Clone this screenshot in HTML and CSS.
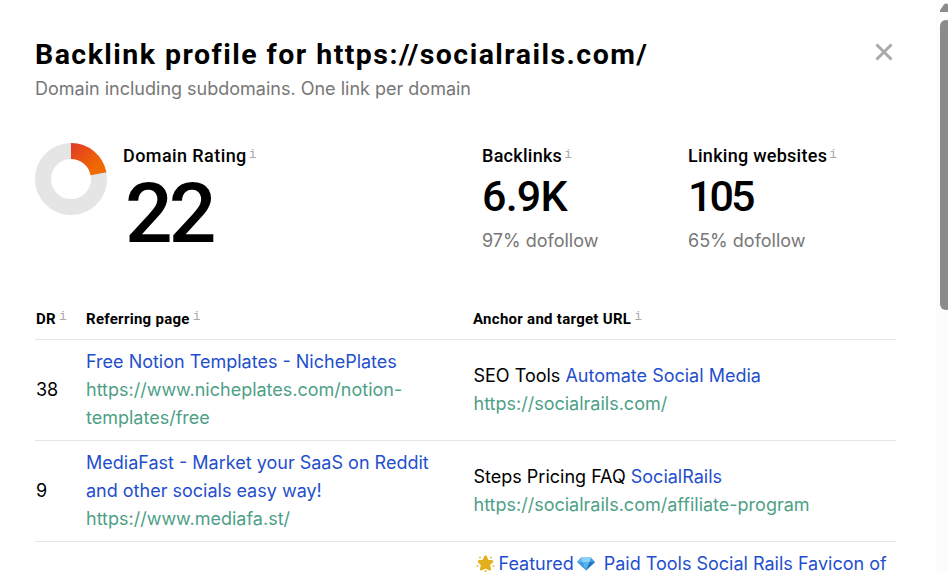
FILE: index.html
```
<!DOCTYPE html>
<html lang="en">
<head>
  <meta charset="UTF-8" />
  <meta name="viewport" content="width=device-width, initial-scale=1.0"/>
  <title>Backlink profile</title>
  <link rel="stylesheet" href="styles.css">
</head>
<body>
  <main class="modal">
    <header class="modal-header">
      <div>
        <h1>Backlink profile for https://socialrails.com/</h1>
        <p class="subtitle">Domain including subdomains. One link per domain</p>
      </div>
      <button class="close" type="button" aria-label="Close">
        <svg width="18" height="18" viewBox="0 0 18 18"><path d="M1.5 1.5l15 15M16.5 1.5l-15 15" fill="none" stroke="#aaa" stroke-width="3"/></svg>
      </button>
    </header>

    <section class="stats">
      <div class="rating">
        <svg class="donut" width="72" height="72" viewBox="0 0 72 72">
          <defs>
            <linearGradient id="heat" x1="0" y1="0" x2="1" y2="1">
              <stop offset="0" stop-color="#e03a28"/>
              <stop offset="0.75" stop-color="#f16a00"/>
            </linearGradient>
          </defs>
          <circle cx="36" cy="36" r="28" fill="none" stroke="#e5e5e5" stroke-width="16"/>
          <path d="M36 0A36 36 0 0 1 71.400 29.300L55.600 32.200A20 20 0 0 0 36 16Z" fill="url(#heat)"/>
        </svg>
        <div>
          <div class="label label-rating">Domain Rating<i class="info">i</i></div>
          <div class="value value-big">22</div>
        </div>
      </div>
      <div class="stat">
        <div class="label">Backlinks<i class="info">i</i></div>
        <div class="value">6.9K</div>
        <div class="note">97% dofollow</div>
      </div>
      <div class="stat">
        <div class="label">Linking websites<i class="info">i</i></div>
        <div class="value value-sites">105</div>
        <div class="note">65% dofollow</div>
      </div>
    </section>

    <table class="links">
      <thead>
        <tr>
          <th class="col-dr">DR<i class="info">i</i></th>
          <th class="col-page">Referring page<i class="info">i</i></th>
          <th class="col-anchor">Anchor and target URL<i class="info">i</i></th>
        </tr>
      </thead>
      <tbody>
        <tr>
          <td class="dr">38</td>
          <td>
            <a class="title">Free Notion Templates - NichePlates</a>
            <a class="url">https://www.nicheplates.com/notion-templates/free</a>
          </td>
          <td>
            <div>SEO Tools <a class="anchor">Automate Social Media</a></div>
            <a class="url">https://socialrails.com/</a>
          </td>
        </tr>
        <tr>
          <td class="dr">9</td>
          <td>
            <a class="title">MediaFast - Market your SaaS on Reddit and other socials easy way!</a>
            <a class="url">https://www.mediafa.st/</a>
          </td>
          <td>
            <div>Steps Pricing FAQ <a class="anchor">SocialRails</a></div>
            <a class="url">https://socialrails.com/affiliate-program</a>
          </td>
        </tr>
        <tr>
          <td></td>
          <td></td>
          <td>
            <a class="title featured">
              <svg class="emoji" width="19" height="18" viewBox="0 0 19 18">
                <path d="M9.500 2L11.300 6.200L15.800 6.500L12.500 9.600L13.600 14L9.500 11.900L5.400 14L6.500 9.600L3.200 6.500L7.700 6.200Z" fill="#e3b01c" stroke="#e3b01c" stroke-width="3" stroke-linejoin="round"/>
                <g fill="#e9c24d"><circle cx="4" cy="2.500" r="1.100"/><circle cx="15" cy="2.500" r="1.100"/><circle cx="17.500" cy="11" r="1.100"/><circle cx="1.500" cy="11" r="1.100"/><circle cx="9.500" cy="16.300" r="1.200"/></g>
              </svg>Featured<svg class="emoji gem" width="18" height="14" viewBox="0 0 18 14">
                <path d="M4 0.500H14L18 5L9 13.500L0 5Z" fill="#3f9be0"/>
                <path d="M4 0.500L5.500 5H0Z" fill="#62b9ee"/>
                <path d="M4 0.500H14L12.500 5H5.500Z" fill="#8bd3f7"/>
                <path d="M5.500 5H12.500L9 13.500Z" fill="#58b2ec"/>
                <path d="M12.500 5H18L9 13.500Z" fill="#2476bd"/>
              </svg>Paid Tools Social Rails Favicon of
            </a>
          </td>
        </tr>
      </tbody>
    </table>
  </main>

  <aside class="scrollbar">
    <svg class="arrow" width="12" height="9" viewBox="0 0 12 9"><path d="M0 9Q-0.500 8 0.500 6.500L4 1.500Q6 -0.500 8 1.500L12 7V9Z" fill="#8b8b8b"/></svg>
    <div class="thumb"></div>
  </aside>
</body>
</html>
```
FILE: styles.css
```
* {
  box-sizing: border-box;
}
body {
  margin: 0;
  height: 572px;
  overflow: hidden;
  display: flex;
  background: #fff;
  color: #000;
  font-family: Inter, "Liberation Sans", sans-serif;
  font-size: 18px;
  line-height: 28px;
}
.modal {
  width: 936px;
  height: 572px;
  padding: 36px 40px 0 35px;
  overflow: hidden;
}
.modal-header {
  display: flex;
  justify-content: space-between;
  height: 107px;
}
h1 {
  margin: 0;
  padding-top: 1px;
  font-family: Roboto, "Liberation Sans", sans-serif;
  font-size: 28.5px;
  line-height: 36px;
  font-weight: 700;
  letter-spacing: 1.46px;
  white-space: nowrap;
}
.subtitle {
  margin: 2px 0 0;
  color: #777;
}
.close {
  width: 18px;
  height: 18px;
  margin: 7px 3px 0 0;
  padding: 0;
  border: none;
  background: none;
  cursor: pointer;
}
.close svg {
  display: block;
}
.stats {
  display: grid;
  grid-template-columns: 447px 206px 1fr;
  height: 156px;
}
.rating {
  display: flex;
  gap: 16px;
}
.label {
  height: 28px;
  margin-top: -1px;
  font-family: Roboto, "Liberation Sans", sans-serif;
  font-weight: 500;
  letter-spacing: 0.27px;
  white-space: nowrap;
}
.label-rating {
  letter-spacing: 0.42px;
}
.info {
  margin-left: 3px;
  position: relative;
  top: -4px;
  font-family: "Liberation Mono", monospace;
  font-size: 13px;
  line-height: 1;
  font-style: normal;
  font-weight: 400;
  letter-spacing: 0;
  color: #aaa;
}
.label .info {
  margin-left: 2px;
}
.value {
  height: 57px;
  font-family: Roboto, "Liberation Sans", sans-serif;
  font-weight: 500;
  font-size: 43px;
  line-height: 53px;
  letter-spacing: -0.8px;
}
.value-sites {
  letter-spacing: -3px;
}
.value-big {
  padding-left: 2px;
  font-size: 84px;
  line-height: 88px;
  letter-spacing: -4px;
}
.note {
  color: #777;
}
.links {
  width: 861px;
  table-layout: fixed;
  border-collapse: separate;
  border-spacing: 0;
}
.col-dr {
  width: 51px;
}
.col-page {
  width: 387px;
}
th {
  height: 41px;
  padding: 0 0 1px;
  border-bottom: 1px solid #e5e5e5;
  font-family: Roboto, "Liberation Sans", sans-serif;
  font-size: 15px;
  font-weight: 700;
  letter-spacing: 0.28px;
  text-align: left;
  white-space: nowrap;
}
.col-dr {
  padding-left: 1px;
}
td {
  padding: 8px 20px 8px 0;
  border-bottom: 1px solid #e5e5e5;
  vertical-align: middle;
}
td:last-child {
  padding-left: 0.5px;
  padding-right: 0;
}
td.dr {
  padding-left: 1px;
  padding-right: 0;
}
.title, .url {
  display: block;
}
.title, .anchor {
  color: #1f4fcc;
}
.url {
  color: #4e9f87;
}
.featured {
  white-space: nowrap;
}
.emoji {
  margin: 0 4px 0 2px;
  vertical-align: -3px;
}
.gem {
  margin: 0 9px 0 3px;
  vertical-align: -1px;
}
.scrollbar {
  width: 12px;
  padding: 3px 0 0 4px;
  background: #fcfcfc;
  overflow: hidden;
}
.arrow {
  display: block;
}
.thumb {
  width: 12px;
  height: 290px;
  margin-top: 8px;
  border-radius: 6px;
  background: #8b8b8b;
}
```
